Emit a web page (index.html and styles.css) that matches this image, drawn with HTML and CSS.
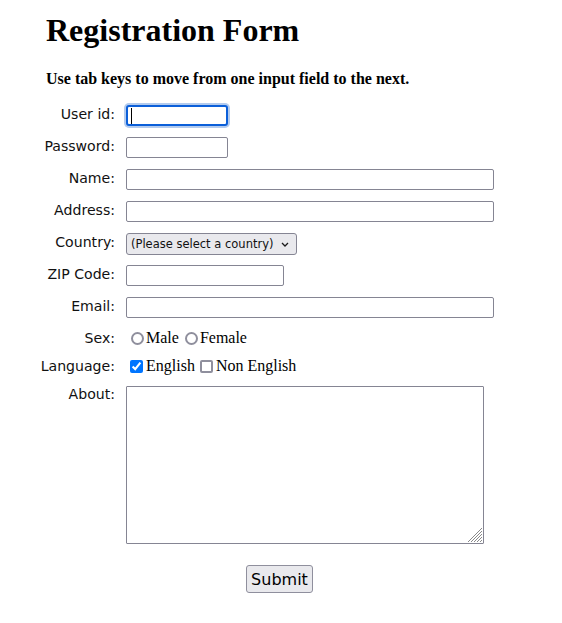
FILE: index.html
```html
<!DOCTYPE html>
<html lang="en">
<head>
<meta charset="utf-8">
<title>Registration Form</title>
<link rel="stylesheet" href="styles.css">
</head>
<body>
<div class="page">
  <h1 class="title">Registration Form</h1>
  <h4 class="hint">Use tab keys to move from one input field to the next.</h4>
  <form class="form">
    <label class="lbl" for="userid">User id:</label>
    <div class="field">
      <span class="focus-wrap">
        <input class="inp inp-short is-focused" id="userid" type="text">
        <span class="caret"></span>
      </span>
    </div>

    <label class="lbl" for="passid">Password:</label>
    <div class="field"><input class="inp inp-short" id="passid" type="password"></div>

    <label class="lbl" for="username">Name:</label>
    <div class="field"><input class="inp inp-long" id="username" type="text"></div>

    <label class="lbl" for="address">Address:</label>
    <div class="field"><input class="inp inp-long" id="address" type="text"></div>

    <label class="lbl" for="country">Country:</label>
    <div class="field">
      <span class="select-wrap">
        <select class="sel" id="country">
          <option>(Please select a country)</option>
          <option>Australia</option>
          <option>Canada</option>
          <option>India</option>
          <option>Russia</option>
          <option>USA</option>
        </select>
        <svg class="chev" width="8" height="5" viewBox="0 0 8 5"><path d="M1 1 L4 4 L7 1" fill="none" stroke="#1a1a1a" stroke-width="1.3"/></svg>
      </span>
    </div>

    <label class="lbl" for="zip">ZIP Code:</label>
    <div class="field"><input class="inp inp-zip" id="zip" type="text"></div>

    <label class="lbl" for="email">Email:</label>
    <div class="field"><input class="inp inp-long" id="email" type="text"></div>

    <span class="lbl">Sex:</span>
    <div class="field choice choice-radio"><input class="rad" type="radio" name="sex" value="Male" id="msex"><label for="msex">Male</label><input class="rad" type="radio" name="sex" value="Female" id="fsex"><label for="fsex">Female</label></div>

    <span class="lbl">Language:</span>
    <div class="field choice choice-check"><input class="chk" type="checkbox" name="en" id="en" checked><label for="en">English</label><input class="chk chk-off" type="checkbox" name="nonen" id="nonen"><label for="nonen">Non English</label></div>

    <label class="lbl" for="desc">About:</label>
    <div class="field">
      <span class="ta-wrap">
        <textarea class="ta" id="desc"></textarea>
        <svg class="grip" width="15" height="15" viewBox="0 0 15 15">
          <path d="M1 15 L15 1 M4 15 L15 4 M7 15 L15 7 M10 15 L15 10 M13 15 L15 13" stroke="#8a8a8a" stroke-width="1" fill="none"/>
        </svg>
      </span>
    </div>
  </form>
  <div class="actions"><button class="btn" type="submit">Submit</button></div>
</div>
</body>
</html>
```
FILE: styles.css
```css
html, body {
  margin: 0;
  padding: 0;
  background: #ffffff;
}

.page {
  padding: 12px 0 0 46px;
  font-family: "Liberation Serif", "Times New Roman", serif;
  color: #000;
}

.title {
  margin: 0 0 21px;
  font-size: 32px;
  font-weight: bold;
  line-height: normal;
}

.hint {
  margin: 0;
  font-size: 16px;
  font-weight: bold;
  line-height: normal;
}

.form {
  margin: 17px 0 0 -8px;
  display: grid;
  grid-template-columns: 77px auto;
  grid-template-rows: repeat(7, 22px) 18px 18px auto;
  column-gap: 11px;
  row-gap: 10px;
  align-items: start;
}

.lbl {
  justify-self: end;
  padding-top: 1px;
  font-family: "DejaVu Sans", Verdana, sans-serif;
  font-size: 14.1px;
  line-height: 16px;
  color: #111;
  white-space: nowrap;
}

.field {
  display: flex;
  align-items: flex-start;
}

.inp {
  box-sizing: border-box;
  height: 21px;
  margin: 0;
  padding: 1px 3px;
  border: 1px solid #858593;
  border-radius: 2px;
  background: #fff;
  font-family: "DejaVu Sans", sans-serif;
  font-size: 12px;
}

.inp-short { width: 102px; }
.inp-long { width: 368px; }
.inp-zip { width: 158px; }

.focus-wrap {
  position: relative;
  display: inline-block;
  height: 21px;
}

.is-focused {
  border: 2px solid #0b5fd9;
  border-radius: 3px;
  outline: none;
  box-shadow: 0 0 0 2px #b3cbee;
}

.caret {
  position: absolute;
  left: 5px;
  top: 3px;
  width: 1px;
  height: 16px;
  background: #000;
}

.select-wrap {
  position: relative;
  display: inline-block;
}

.sel {
  box-sizing: border-box;
  width: 171px;
  height: 22px;
  margin: 0;
  padding: 0 0 0 4px;
  border: 1px solid #858593;
  border-radius: 3px;
  background: #e9e9ed;
  font-family: "DejaVu Sans", sans-serif;
  font-size: 11.5px;
  color: #111;
  -webkit-appearance: none;
  appearance: none;
}

.chev {
  position: absolute;
  right: 8px;
  top: 9px;
  pointer-events: none;
}

.choice {
  display: flex;
  align-items: center;
  height: 18px;
  font-size: 16px;
  line-height: 18px;
  white-space: nowrap;
}

.rad {
  box-sizing: border-box;
  -webkit-appearance: none;
  appearance: none;
  width: 13px;
  height: 13px;
  margin: 1px 2px 0 5px;
  border: 2px solid #8f8f9d;
  border-radius: 50%;
  background: #fff;
}

.choice-radio label {
  margin-right: 1px;
}

.chk {
  width: 13px;
  height: 13px;
  margin: 1px 3px 0 4px;
  accent-color: #0075ff;
}

.chk-off {
  box-sizing: border-box;
  -webkit-appearance: none;
  appearance: none;
  border: 2px solid #8f8f9d;
  border-radius: 2px;
  background: #fff;
}

.choice-check label + .chk {
  margin-left: 5px;
}

.ta-wrap {
  position: relative;
  display: inline-block;
  margin-top: 1px;
}

.ta {
  display: block;
  box-sizing: border-box;
  width: 358px;
  height: 158px;
  margin: 0;
  padding: 2px;
  border: 1px solid #858593;
  border-radius: 1px;
  background: #fff;
  font-family: "Liberation Mono", monospace;
  font-size: 13px;
  resize: none;
}

.grip {
  position: absolute;
  right: 2px;
  bottom: 2px;
  pointer-events: none;
}

.actions {
  margin: 21px 0 0 200px;
  display: flex;
}

.btn {
  box-sizing: border-box;
  width: 67px;
  height: 28px;
  margin: 0;
  padding: 0;
  border: 1px solid #8f8f9d;
  border-radius: 3px;
  background: #e9e9ed;
  font-family: "DejaVu Sans", Verdana, sans-serif;
  font-size: 16px;
  color: #000;
}
```
